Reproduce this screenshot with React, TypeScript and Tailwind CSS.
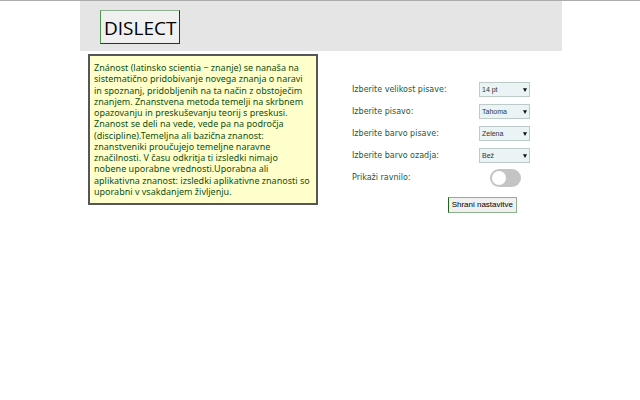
import React, { useState } from "react";

const intro = `Znánost (latinsko scientia − znanje) se nanaša na
sistematično pridobivanje novega znanja o naravi
in spoznanj, pridobljenih na ta način z obstoječim
znanjem. Znanstvena metoda temelji na skrbnem
opazovanju in preskuševanju teorij s preskusi.
Znanost se deli na vede, vede pa na področja
(discipline).Temeljna ali bazična znanost:
znanstveniki proučujejo temeljne naravne
značilnosti. V času odkritja ti izsledki nimajo
nobene uporabne vrednosti.Uporabna ali
aplikativna znanost: izsledki aplikativne znanosti so
uporabni v vsakdanjem življenju.`;

type SettingProps = {
  id: string;
  label: string;
  options: string[];
};

const Setting: React.FC<SettingProps> = ({ id, label, options }) => {
  const [value, setValue] = useState(options[0]);

  return (
    <div className="flex items-center justify-between">
      <label htmlFor={id} className="text-[8px] leading-3 text-[#1d5a32]">
        {label}
      </label>
      <div className="relative">
        <select
          id={id}
          value={value}
          onChange={(e) => setValue(e.target.value)}
          className="block h-[15px] w-[51px] appearance-none border border-[#bccaca] bg-[#ebf4f4] pt-px pl-0.5 font-['Liberation_Sans'] text-[7px] text-[#333333]"
        >
          {options.map((option) => (
            <option key={option}>{option}</option>
          ))}
        </select>
        <svg
          viewBox="0 0 4 4"
          className="pointer-events-none absolute top-1.5 right-[3px] size-1"
        >
          <path d="M0 0.3h4L2 4z" fill="#111" />
        </svg>
      </div>
    </div>
  );
};

const App: React.FC = () => {
  const [ruler, setRuler] = useState(false);

  return (
    <div className="min-h-screen border-t border-[#acacac] bg-white font-['DejaVu_Sans',sans-serif]">
      <div className="mr-[78px] ml-20">
        <header className="flex h-[50px] items-start bg-[#e5e5e5] px-5 pt-[9px]">
          <h1 className="flex h-[34px] items-center border border-t-[#8fb08f] border-r-[#005000] border-b-[#005000] border-l-[#4f964f] bg-[#f0f0f0] px-[3px] pt-0.5 font-['Open_Sans',sans-serif] text-[19px] leading-none text-black">
            DISLECT
          </h1>
        </header>

        <main className="flex items-start pt-[3px] pr-8 pl-2">
          <p className="w-[230px] shrink-0 border-2 border-[#55565a] bg-[#ffffcc] px-1 py-[6px] font-['Noto_Sans',sans-serif] text-[9px] leading-tight whitespace-pre text-[#0f4f14]">
            {intro}
          </p>

          <form
            className="flex flex-1 flex-col pt-7 pl-[34px]"
            onSubmit={(e) => e.preventDefault()}
          >
            <div className="flex flex-col gap-[7px]">
              <Setting
                id="size"
                label="Izberite velikost pisave:"
                options={["14 pt", "12 pt", "16 pt", "18 pt"]}
              />
              <Setting
                id="font"
                label="Izberite pisavo:"
                options={["Tahoma", "Verdana", "Arial"]}
              />
              <Setting
                id="color"
                label="Izberite barvo pisave:"
                options={["Zelena", "Modra", "Rjava"]}
              />
              <Setting
                id="background"
                label="Izberite barvo ozadja:"
                options={["Bež", "Bela", "Siva"]}
              />
            </div>

            <div className="mt-[6px] flex items-center justify-between pr-[9px]">
              <label htmlFor="ruler" className="text-[8px] leading-3 text-[#1d5a32]">
                Prikaži ravnilo:
              </label>
              <input
                id="ruler"
                type="checkbox"
                checked={ruler}
                onChange={(e) => setRuler(e.target.checked)}
                className="h-[18px] w-[31px] appearance-none rounded-full bg-[#c4c4c4] p-0.5 before:block before:size-3.5 before:rounded-full before:bg-white checked:bg-[#2196f3] checked:before:translate-x-3"
              />
            </div>

            <button
              type="submit"
              className="mt-2.5 mr-[13px] flex h-4 items-center self-end border border-t-[#8fb08f] border-r-[#8fb08f] border-b-[#8fb08f] border-l-[#1e641e] bg-[#f0f0f0] px-[3px] font-['Liberation_Sans'] text-[8px] text-black"
            >
              Shrani nastavitve
            </button>
          </form>
        </main>
      </div>
    </div>
  );
};

export default App;
